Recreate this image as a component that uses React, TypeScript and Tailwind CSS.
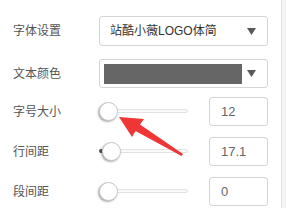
const font = "font-['Liberation_Sans','Noto_Sans_CJK_SC',sans-serif]";

const labelCls = "w-[99px] shrink-0 pl-[13px] text-[12px] leading-none text-[#555]";

const boxCls =
  "box-border rounded-[3px] border border-[#d4d4d4] bg-white";

function Caret() {
  return (
    <svg width="9" height="7" viewBox="0 0 9 7" className="shrink-0">
      <polygon points="0,0 9,0 4.5,7" fill="#595959" />
    </svg>
  );
}

function Slider({ left, filled = 0 }: { left: number; filled?: number }) {
  return (
    <div className="relative h-[19px] w-[89px]">
      <div className="absolute left-0 right-0 top-[7px] h-[4px] rounded-full border border-[#e2e2e2] bg-[#fafafa]" />
      {filled > 0 && (
        <div
          className="absolute left-0 top-[7px] h-[4px] rounded-l-full bg-[#555]"
          style={{ width: filled }}
        />
      )}
      <div
        className="absolute top-0 h-[19px] w-[19px] rounded-full border border-[#c8c8c8] bg-white shadow-[-1px_1px_2px_rgba(0,0,0,0.35)]"
        style={{ left }}
      />
    </div>
  );
}

function NumRow({ label, value, left, filled }: { label: string; value: string; left: number; filled?: number }) {
  return (
    <div className="flex h-[29px] items-center">
      <div className={labelCls}>{label}</div>
      <Slider left={left} filled={filled} />
      <div
        className={`${boxCls} ml-[21px] flex h-[29px] w-[59px] items-center pl-[11px] text-[13px] text-[#666]`}
      >
        {value}
      </div>
    </div>
  );
}

export default function App() {
  return (
    <div className={`${font} relative flex h-[208px] w-[286px] overflow-hidden bg-[#f3f3f3]`}>
      <div className="h-full w-[282px] border-r border-[#e3e3e3] bg-white pt-[16px]">
        <div className="flex h-[30px] items-center">
          <div className={labelCls}>字体设置</div>
          <div
            className={`${boxCls} flex h-[30px] w-[169px] items-center justify-between pl-[10px] pr-[11px] text-[12px] text-[#333]`}
          >
            <span>站酷小薇LOGO体简</span>
            <Caret />
          </div>
        </div>

        <div className="mt-[13px] flex h-[29px] items-center">
          <div className={labelCls}>文本颜色</div>
          <div
            className={`${boxCls} flex h-[29px] w-[169px] items-center justify-between pl-[4px] pr-[11px]`}
          >
            <div className="h-[20px] w-[138px] bg-[#666]" />
            <Caret />
          </div>
        </div>

        <div className="mt-[9px] flex flex-col gap-[11px]">
          <NumRow label="字号大小" value="12" left={0} />
          <NumRow label="行间距" value="17.1" left={3} filled={3} />
          <NumRow label="段间距" value="0" left={0} />
        </div>
      </div>

      <svg
        className="pointer-events-none absolute left-0 top-0"
        width="286"
        height="208"
        viewBox="0 0 286 208"
      >
        <polygon
          points="119,117 144,119 140,124.5 183,154 181.5,156 135.5,131 132,137"
          fill="#ef3535"
        />
      </svg>
    </div>
  );
}
